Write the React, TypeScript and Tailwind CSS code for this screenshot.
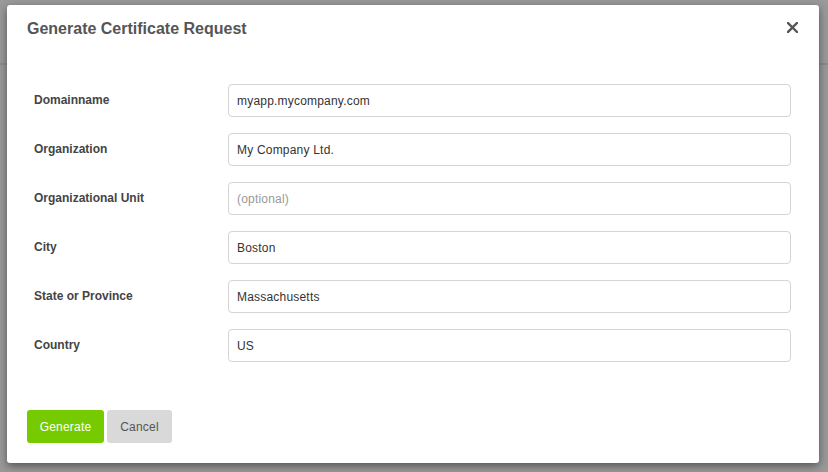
const fields = [
  { label: "Domainname", value: "myapp.mycompany.com" },
  { label: "Organization", value: "My Company Ltd." },
  { label: "Organizational Unit", value: "", placeholder: "(optional)" },
  { label: "City", value: "Boston" },
  { label: "State or Province", value: "Massachusetts" },
  { label: "Country", value: "US" },
];

export default function App() {
  return (
    <div className="relative h-[472px] w-[828px] overflow-hidden bg-[#999999] font-['Liberation_Sans',Arial,sans-serif]">
      {/* page behind the overlay */}
      <div className="h-[65px] border-b-2 border-[#8c8c8c]" />

      <div className="absolute left-[7px] top-[5px] flex h-[458px] w-[812px] flex-col rounded-[3px] bg-white shadow-[0_3px_8px_rgba(0,0,0,0.45)]">
        <div className="flex h-[48px] items-center justify-between pl-5 pr-[19px]">
          <h2 className="text-[16px] font-bold text-[#555555]">Generate Certificate Request</h2>
          <button className="-mt-[4px] flex h-4 w-4 items-center justify-center text-[#555555]">
            <svg width="11" height="11" viewBox="0 0 11 11">
              <path d="M1 1L10 10M10 1L1 10" stroke="currentColor" strokeWidth="2.4" strokeLinecap="square" />
            </svg>
          </button>
        </div>

        <div className="flex flex-col gap-4 pl-[27px] pr-[28px] pt-[31px]">
          {fields.map((f) => (
            <div key={f.label} className="flex items-center">
              <label className="w-[194px] shrink-0 pb-[2px] text-[12px] font-bold text-[#444444]">{f.label}</label>
              <input
                readOnly
                value={f.value}
                placeholder={f.placeholder}
                className="h-[33px] flex-1 rounded-[4px] border border-[#d4d4d4] px-2 text-[12px] tracking-[0.2px] text-[#333333] outline-none placeholder:text-[#999999]"
              />
            </div>
          ))}
        </div>

        <div className="mt-auto flex gap-[3px] px-5 pb-5">
          <button className="h-[33px] w-[77px] rounded-[3px] bg-[#76cb00] text-[12px] tracking-[0.2px] text-white">Generate</button>
          <button className="h-[33px] w-[65px] rounded-[3px] bg-[#d9d9d9] text-[12px] tracking-[0.2px] text-[#555555]">Cancel</button>
        </div>
      </div>
    </div>
  );
}
